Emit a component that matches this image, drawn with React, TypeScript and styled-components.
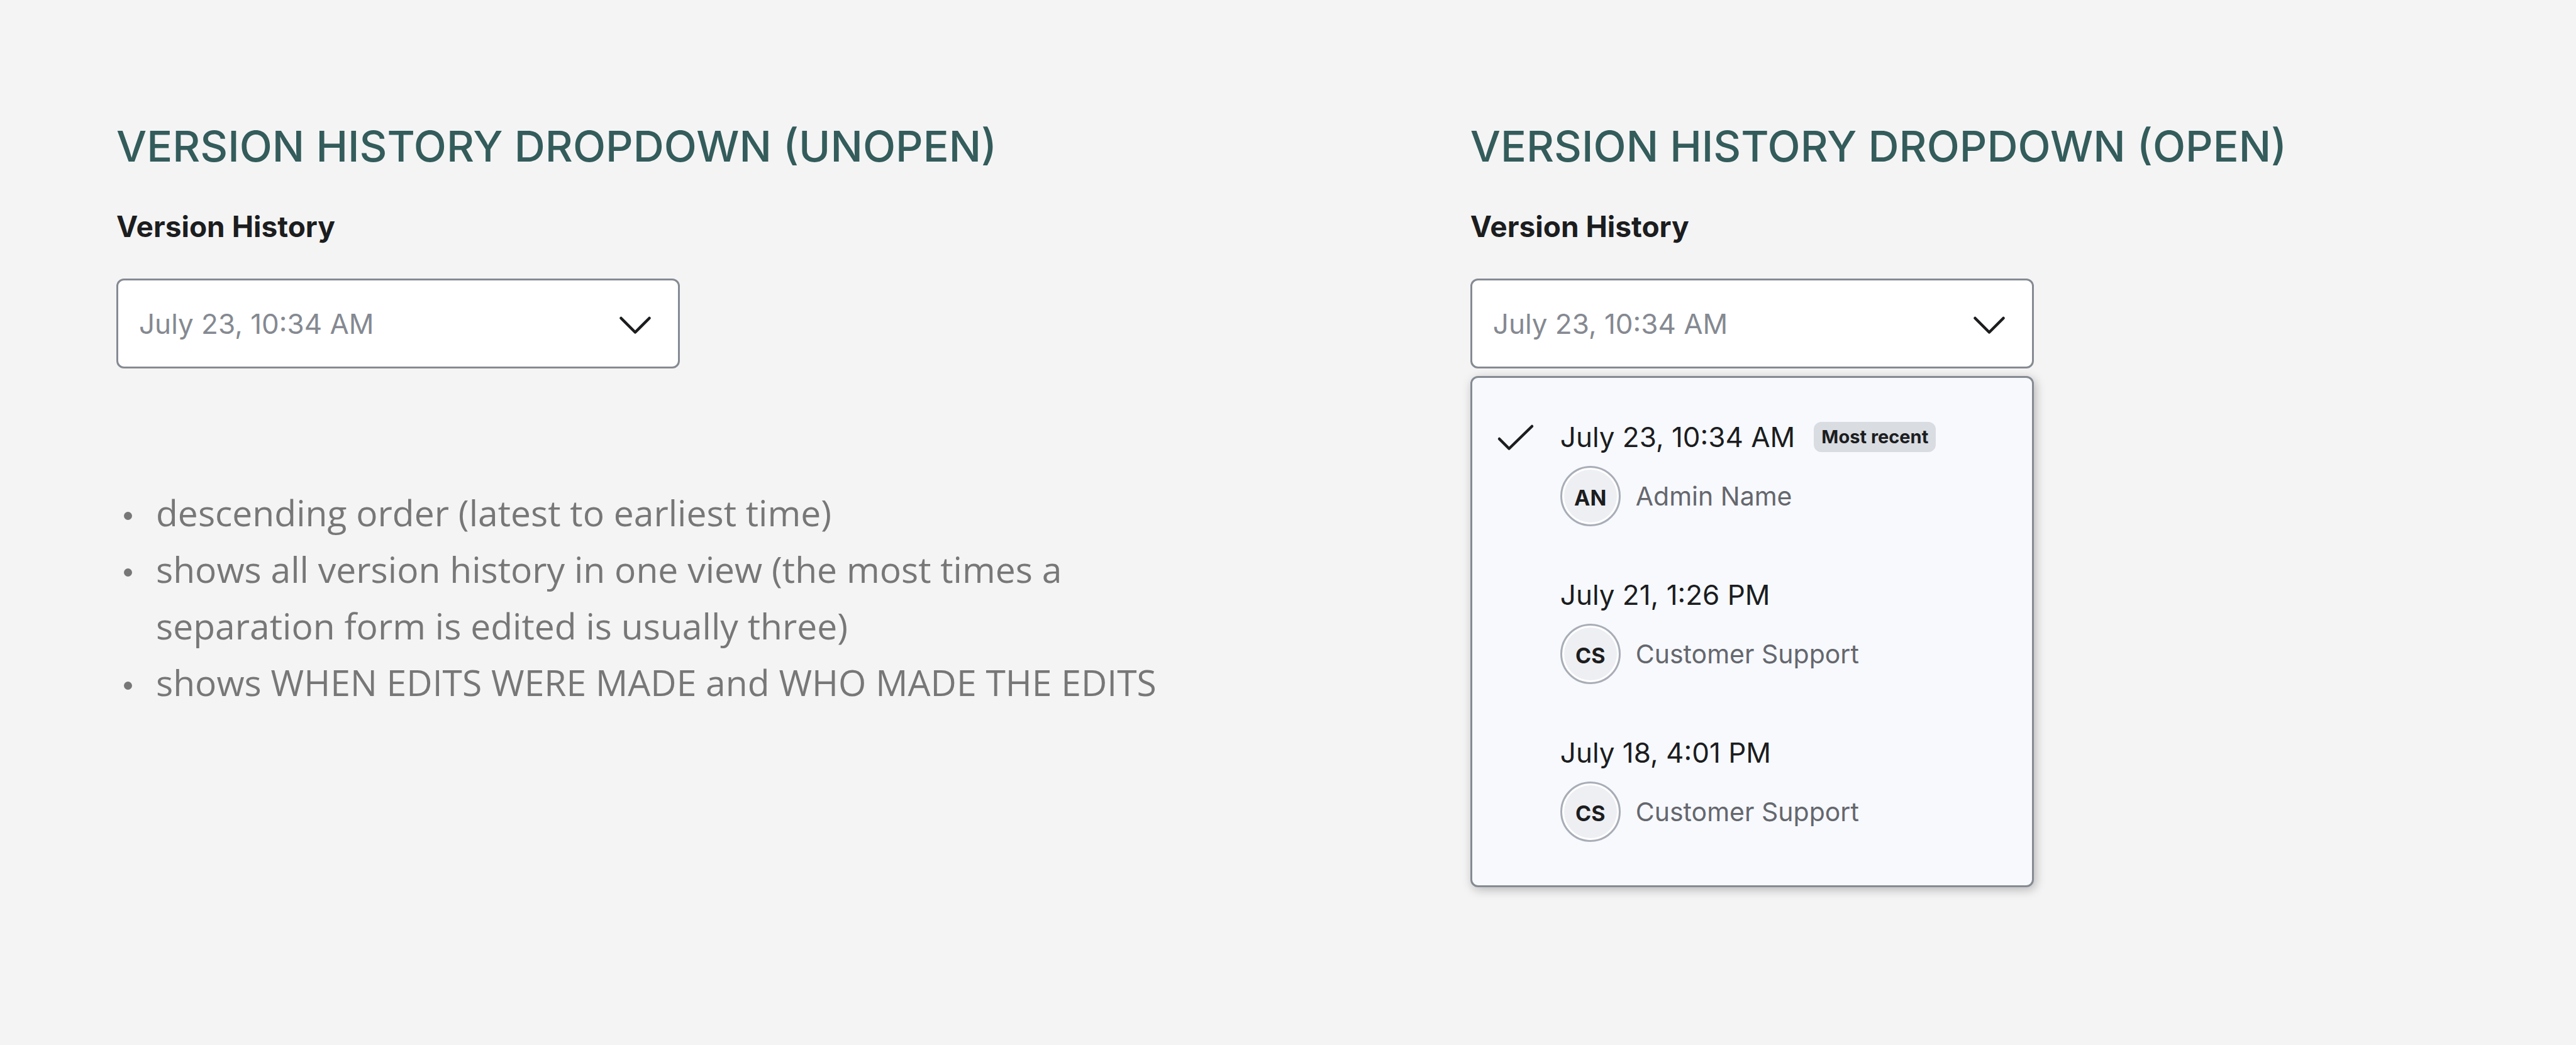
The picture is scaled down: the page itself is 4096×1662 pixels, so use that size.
import React from 'react';
import styled, { createGlobalStyle } from 'styled-components';

const color = {
  page: '#f4f4f4',
  heading: '#335c5b',
  ink: '#1c1d1f',
  border: '#858a93',
  placeholder: '#858991',
  note: '#777777',
  panel: '#f7f9fd',
  badge: '#d9dce1',
  name: '#65676d',
  avatar: '#eeeff3',
  avatarRing: '#a8adb6',
};

const GlobalStyle = createGlobalStyle`
  *, *::before, *::after { box-sizing: border-box; }
  body {
    margin: 0;
    background: ${color.page};
    color: ${color.ink};
    font-family: Inter, "Liberation Sans", sans-serif;
  }
`;

const Page = styled.main`
  display: grid;
  grid-template-columns: 5fr 4fr;
  align-items: start;
  min-height: 100vh;
  padding: 187px 36px 187px 185px;
`;

const Column = styled.section`
  min-width: 0;
`;

const Title = styled.h2`
  margin: 0 0 53px;
  color: ${color.heading};
  font-size: 68px;
  font-weight: 500;
  line-height: 90px;
`;

const Field = styled.div`
  display: flex;
  flex-direction: column;
  width: 100%;
  max-width: 896px;
`;

const Label = styled.label`
  margin-bottom: 53px;
  font-size: 46px;
  font-weight: 700;
  line-height: 60px;
`;

const Control = styled.div`
  display: grid;
  align-items: center;

  > * {
    grid-area: 1 / 1;
  }
`;

const Select = styled.select`
  appearance: none;
  width: 100%;
  height: 143px;
  margin: 0;
  padding: 0 120px 0 33px;
  border: 3px solid ${color.border};
  border-radius: 12px;
  background: #ffffff;
  color: ${color.placeholder};
  font-family: inherit;
  font-size: 44px;
  font-weight: 400;
  line-height: 60px;
  text-align: left;
`;

const ChevronIcon = styled.svg`
  justify-self: end;
  width: 60px;
  height: 60px;
  margin-right: 41px;
  pointer-events: none;
`;

const Notes = styled.ul`
  max-width: 1720px;
  margin: 184px 0 0;
  padding: 0;
  list-style: none;
  color: ${color.note};
  font-family: "Open Sans", sans-serif;
  font-size: 57px;
  line-height: 90px;
`;

const Note = styled.li`
  display: flex;
  align-items: flex-start;

  &::before {
    content: "";
    flex: none;
    width: 13px;
    height: 13px;
    margin: 44px 38px 0 12px;
    border-radius: 50%;
    background: currentColor;
  }
`;

const Panel = styled.ul`
  display: flex;
  flex-direction: column;
  gap: 79px;
  margin: 12px 0 0;
  padding: 64px 36px 69px;
  border: 3px solid ${color.border};
  border-radius: 12px;
  background: ${color.panel};
  box-shadow: 3px 4px 16px rgba(0, 0, 0, 0.26);
  list-style: none;
`;

const Option = styled.li`
  display: grid;
  grid-template-columns: 72px 1fr;
  column-gap: 32px;
  cursor: pointer;
`;

const CheckIcon = styled.svg`
  width: 72px;
  height: 60px;
`;

const Details = styled.div`
  grid-column: 2;
  display: flex;
  flex-direction: column;
  gap: 16px;
`;

const When = styled.div`
  display: flex;
  align-items: center;
  gap: 30px;
  font-size: 44px;
  line-height: 60px;
`;

const Badge = styled.span`
  padding: 0 12px;
  border-radius: 12px;
  background: ${color.badge};
  font-size: 29px;
  font-weight: 700;
  line-height: 48px;
`;

const Who = styled.div`
  display: flex;
  align-items: center;
  gap: 24px;
  color: ${color.name};
  font-size: 41px;
  line-height: 60px;
`;

const Avatar = styled.span`
  display: flex;
  align-items: center;
  justify-content: center;
  width: 96px;
  height: 96px;
  padding-top: 6px;
  border: 3px solid ${color.avatarRing};
  border-radius: 50%;
  background: ${color.avatar};
  box-shadow: inset 0 0 0 3px #ffffff;
  color: ${color.ink};
  font-size: 34px;
  font-weight: 700;
  line-height: 40px;
`;

interface Version {
  when: string;
  who: string;
  initials: string;
}

const versions: Version[] = [
  { when: 'July 23, 10:34 AM', who: 'Admin Name', initials: 'AN' },
  { when: 'July 21, 1:26 PM', who: 'Customer Support', initials: 'CS' },
  { when: 'July 18, 4:01 PM', who: 'Customer Support', initials: 'CS' },
];

const notes = [
  'descending order (latest to earliest time)',
  'shows all version history in one view (the most times a separation form is edited is usually three)',
  'shows WHEN EDITS WERE MADE and WHO MADE THE EDITS',
];

const strokeProps = {
  fill: 'none',
  stroke: color.ink,
  strokeWidth: 4.5,
  strokeLinecap: 'round',
  strokeLinejoin: 'round',
} as const;

function VersionField({ id, open = false }: { id: string; open?: boolean }) {
  const [selected, setSelected] = React.useState(0);
  return (
    <Field>
      <Label htmlFor={id}>Version History</Label>
      <Control>
        <Select
          id={id}
          value={selected}
          onChange={(event) => setSelected(Number(event.target.value))}
        >
          {versions.map((version, index) => (
            <option key={version.when} value={index}>
              {version.when}
            </option>
          ))}
        </Select>
        <ChevronIcon viewBox="0 0 60 60" aria-hidden="true">
          <path d="M7.5 21 L30 43.5 L52.5 21" {...strokeProps} />
        </ChevronIcon>
      </Control>
      {open && (
        <Panel role="listbox" aria-label="Version History">
          {versions.map((version, index) => (
            <Option
              key={version.when}
              role="option"
              aria-selected={index === selected}
              onClick={() => setSelected(index)}
            >
              {index === selected && (
                <CheckIcon viewBox="0 0 72 60" aria-hidden="true">
                  <path d="M7 33 L22.5 48.5 L59 13" {...strokeProps} />
                </CheckIcon>
              )}
              <Details>
                <When>
                  <span>{version.when}</span>
                  {index === 0 && <Badge>Most recent</Badge>}
                </When>
                <Who>
                  <Avatar aria-hidden="true">{version.initials}</Avatar>
                  <span>{version.who}</span>
                </Who>
              </Details>
            </Option>
          ))}
        </Panel>
      )}
    </Field>
  );
}

export default function App() {
  return (
    <>
      <GlobalStyle />
      <Page>
        <Column>
          <Title>VERSION HISTORY DROPDOWN (UNOPEN)</Title>
          <VersionField id="version-closed" />
          <Notes>
            {notes.map((note) => (
              <Note key={note}>
                <span>{note}</span>
              </Note>
            ))}
          </Notes>
        </Column>
        <Column>
          <Title>VERSION HISTORY DROPDOWN (OPEN)</Title>
          <VersionField id="version-open" open />
        </Column>
      </Page>
    </>
  );
}
